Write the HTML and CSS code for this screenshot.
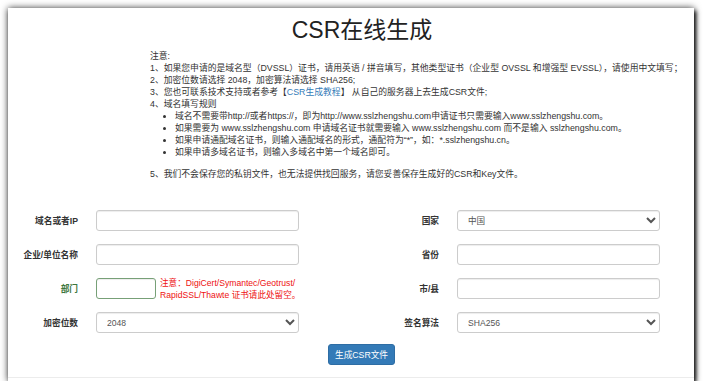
FILE: index.html
```html
<!DOCTYPE html>
<html lang="zh-CN">
<head>
<meta charset="utf-8">
<title>CSR在线生成</title>
<link rel="stylesheet" href="styles.css">
</head>
<body>
<div class="panel">
  <div class="inner">
    <h1 class="title">CSR在线生成</h1>
    <div class="notes">
      <p>注意:</p>
      <p>1、如果您申请的是域名型（DVSSL）证书，请用英语 / 拼音填写，其他类型证书（企业型 OVSSL 和增强型 EVSSL），请使用中文填写；</p>
      <p>2、加密位数请选择 2048，加密算法请选择 SHA256;</p>
      <p>3、您也可联系技术支持或者参考【<a class="link" href="#">CSR生成教程</a>】 从自己的服务器上去生成CSR文件;</p>
      <p>4、域名填写规则</p>
      <ul class="rules">
        <li>域名不需要带http://或者https://，即为http://www.sslzhengshu.com申请证书只需要输入www.sslzhengshu.com。</li>
        <li>如果需要为 www.sslzhengshu.com 申请域名证书就需要输入 www.sslzhengshu.com 而不是输入 sslzhengshu.com。</li>
        <li>如果申请通配域名证书，则输入通配域名的形式，通配符为“*”，如：*.sslzhengshu.cn。</li>
        <li>如果申请多域名证书，则输入多域名中第一个域名即可。</li>
      </ul>
      <p>5、我们不会保存您的私钥文件，也无法提供找回服务，请您妥善保存生成好的CSR和Key文件。</p>
    </div>
    <form class="form">
      <label class="lbl">域名或者IP</label>
      <input class="ctl" type="text">
      <label class="lbl">国家</label>
      <select class="ctl sel"><option>中国</option></select>

      <label class="lbl">企业/单位名称</label>
      <input class="ctl" type="text">
      <label class="lbl">省份</label>
      <input class="ctl" type="text">

      <label class="lbl ok">部门</label>
      <div class="dept">
        <input class="ctl short" type="text">
        <span class="warn">注意：DigiCert/Symantec/Geotrust/<br>RapidSSL/Thawte 证书请此处留空。</span>
      </div>
      <label class="lbl">市/县</label>
      <input class="ctl" type="text">

      <label class="lbl">加密位数</label>
      <select class="ctl sel"><option>2048</option></select>
      <label class="lbl">签名算法</label>
      <select class="ctl sel"><option>SHA256</option></select>
    </form>
    <div class="actions">
      <button class="btn" type="button">生成CSR文件</button>
    </div>
  </div>
</div>
</body>
</html>
```

FILE: styles.css
```css
html, body {
  margin: 0;
  padding: 0;
  background: #ffffff;
}

body {
  font-family: "Liberation Sans", "Noto Sans CJK SC", sans-serif;
  color: #333333;
}

.panel {
  margin: 8px 9px 0 8px;
  height: 373px;
  background: #ffffff;
  box-shadow: 0 0 7px rgba(0, 0, 0, 0.75), 2px 3px 4px rgba(0, 0, 0, 0.9);
  padding-bottom: 3px;
  box-sizing: border-box;
}

.inner {
  height: 370px;
  border-bottom: 1px solid #ececec;
  box-sizing: border-box;
  padding-top: 8px;
}

.title {
  margin: 0;
  padding-left: 22px;
  text-align: center;
  font-weight: normal;
  font-size: 23px;
  line-height: 28px;
  color: #222222;
  font-family: "Liberation Sans", "Noto Sans CJK SC", sans-serif;
}

.notes {
  margin: 6px 0 0 142px;
  font-size: 8.8px;
  line-height: 12px;
  color: #333333;
}

.notes p {
  margin: 0;
  white-space: nowrap;
}

.link {
  color: #337ab7;
  text-decoration: none;
}

.rules {
  margin: 0 0 10px 0;
  padding-left: 25px;
  white-space: nowrap;
}

.form {
  display: grid;
  grid-template-columns: 64px 203px 122px 203px;
  grid-auto-rows: 21px;
  column-gap: 18px;
  row-gap: 13px;
  margin: 30px 0 0 6px;
}

.lbl {
  justify-self: end;
  align-self: center;
  font-size: 8.7px;
  font-weight: bold;
  color: #333333;
  white-space: nowrap;
}

.lbl.ok {
  color: #3c763d;
}

.ctl {
  box-sizing: border-box;
  width: 203px;
  height: 21px;
  margin: 0;
  padding: 0 10px;
  border: 1px solid #cccccc;
  border-radius: 3px;
  background: #ffffff;
  box-shadow: inset 0 1px 1px rgba(0, 0, 0, 0.075);
  font-family: "Liberation Sans", "Noto Sans CJK SC", sans-serif;
  font-size: 8.6px;
  color: #555555;
}

.ctl.sel {
  padding: 0 6px;
}

.dept {
  display: flex;
  align-items: center;
  gap: 4px;
}

.ctl.short {
  width: 60px;
  border-color: #77a077;
}

.warn {
  font-size: 8.6px;
  line-height: 12px;
  color: #ee1111;
  white-space: nowrap;
}

.actions {
  display: flex;
  justify-content: center;
  padding-left: 21px;
  margin-top: 11px;
}

.btn {
  height: 21px;
  padding: 0 6px;
  border: 1px solid #2e6da4;
  border-radius: 3px;
  background: #337ab7;
  color: #ffffff;
  font-family: "Liberation Sans", "Noto Sans CJK SC", sans-serif;
  font-size: 8.7px;
}
```
